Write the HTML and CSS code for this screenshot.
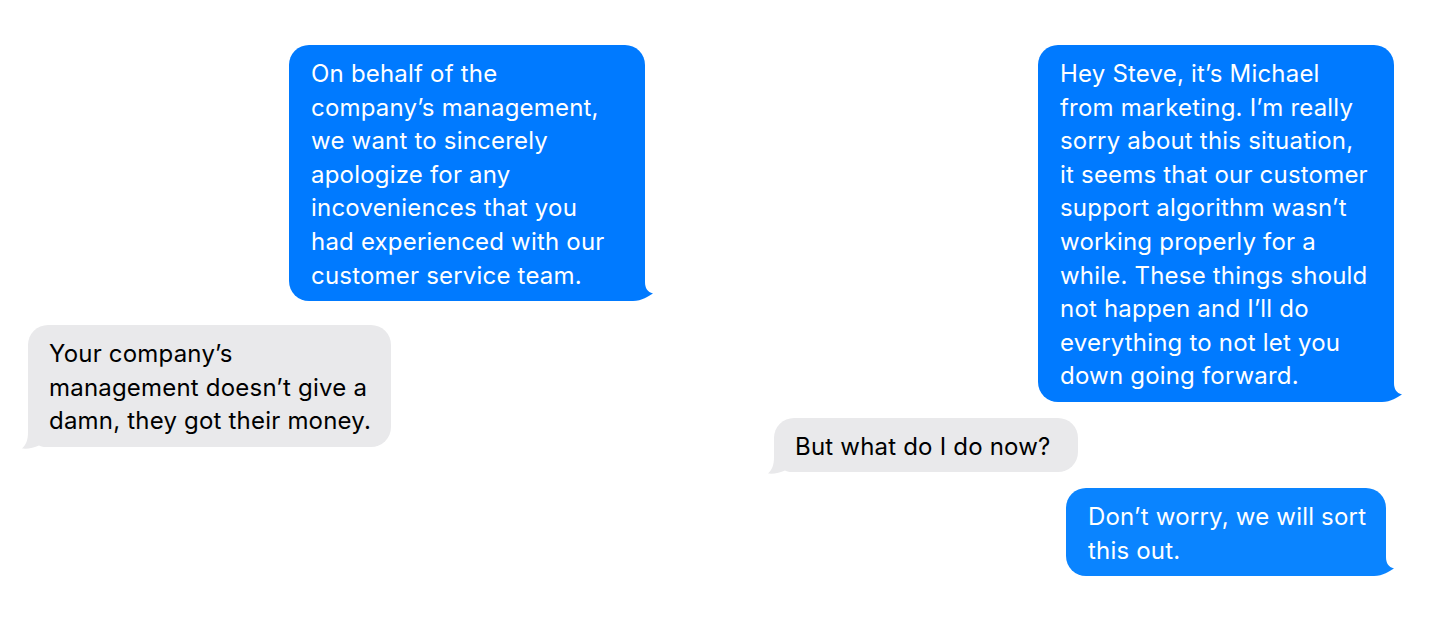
FILE: index.html
```html
<!DOCTYPE html>
<html lang="en">
<head>
    <meta charset="UTF-8">
    <meta name="viewport" content="width=device-width, initial-scale=1.0">
    <title>Messages</title>
    <link rel="stylesheet" href="styles.css">
</head>
<body>

    <div class="conversation">

        <!-- First thread -->
        <div class="thread thread-left">
            <div class="bubble sent w-356">
                On behalf of the<br>
                company’s management,<br>
                we want to sincerely<br>
                apologize for any<br>
                incoveniences that you<br>
                had experienced with our<br>
                customer service team.
                <svg class="tail" width="28" height="28" viewBox="0 0 28 28"><path d="M0 0H20V9C20 15 22.5 19 28 20.5C23.5 23 17 28 8 28H0Z"/></svg>
            </div>
            <div class="bubble received w-363 gap-24">
                Your company’s<br>
                management doesn’t give a<br>
                damn, they got their money.
                <svg class="tail" width="26" height="30" viewBox="0 0 26 30"><path d="M26 0H6V12C6 20 4 25 0 28.5C6 29 12 28 17 25.5C19 26.5 22 27 26 27Z"/></svg>
            </div>
        </div>

        <!-- Second thread -->
        <div class="thread thread-right">
            <div class="bubble sent w-356">
                Hey Steve, it’s Michael<br>
                from marketing. I’m really<br>
                sorry about this situation,<br>
                it seems that our customer<br>
                support algorithm wasn’t<br>
                working properly for a<br>
                while. These things should<br>
                not happen and I’ll do<br>
                everything to not let you<br>
                down going forward.
                <svg class="tail" width="28" height="28" viewBox="0 0 28 28"><path d="M0 0H20V9C20 15 22.5 19 28 20.5C23.5 23 17 28 8 28H0Z"/></svg>
            </div>
            <div class="bubble received w-304">
                But what do I do now?
                <svg class="tail" width="26" height="30" viewBox="0 0 26 30"><path d="M26 0H6V12C6 20 4 25 0 28.5C6 29 12 28 17 25.5C19 26.5 22 27 26 27Z"/></svg>
            </div>
            <div class="bubble sent light w-320 inset">
                Don’t worry, we will sort<br>
                this out.
                <svg class="tail" width="28" height="28" viewBox="0 0 28 28"><path d="M0 0H20V9C20 15 22.5 19 28 20.5C23.5 23 17 28 8 28H0Z"/></svg>
            </div>
        </div>

    </div>

</body>
</html>
```

FILE: styles.css
```css
body {
    font-family: Inter, "Noto Sans", sans-serif;
    background-color: #ffffff;
    margin: 0;
    padding: 0;
}

.conversation {
    display: flex;
    height: 628px;
}

.thread {
    width: 716px;
    box-sizing: border-box;
    display: flex;
    flex-direction: column;
    padding-top: 45px;
}

.thread-left {
    padding-left: 28px;
    padding-right: 71px;
}

.thread-right {
    padding-left: 58px;
    padding-right: 38px;
}

.bubble {
    position: relative;
    box-sizing: border-box;
    padding: 12px 20px 8.8px 22px;
    border-radius: 20px;
    font-size: 24px;
    line-height: 33.6px;
    letter-spacing: 0.2px;
    white-space: nowrap;
    margin-bottom: 16px;
}

.bubble .tail {
    position: absolute;
    bottom: 0;
}

.sent {
    align-self: flex-end;
    background-color: #007aff;
    color: #ffffff;
}

.sent .tail {
    right: -8px;
    fill: #007aff;
}

.sent.light {
    background-color: #0a84ff;
}

.sent.light .tail {
    fill: #0a84ff;
}

.received {
    align-self: flex-start;
    background-color: #e9e9eb;
    color: #000000;
    padding-left: 21px;
}

.received .tail {
    left: -6px;
    bottom: -3px;
    fill: #e9e9eb;
}

.gap-24 {
    margin-top: 8px;
}

.inset {
    margin-right: 8px;
}

.w-356 { width: 356px; }
.w-363 { width: 363px; }
.w-304 { width: 304px; }
.w-320 { width: 320px; }
```
